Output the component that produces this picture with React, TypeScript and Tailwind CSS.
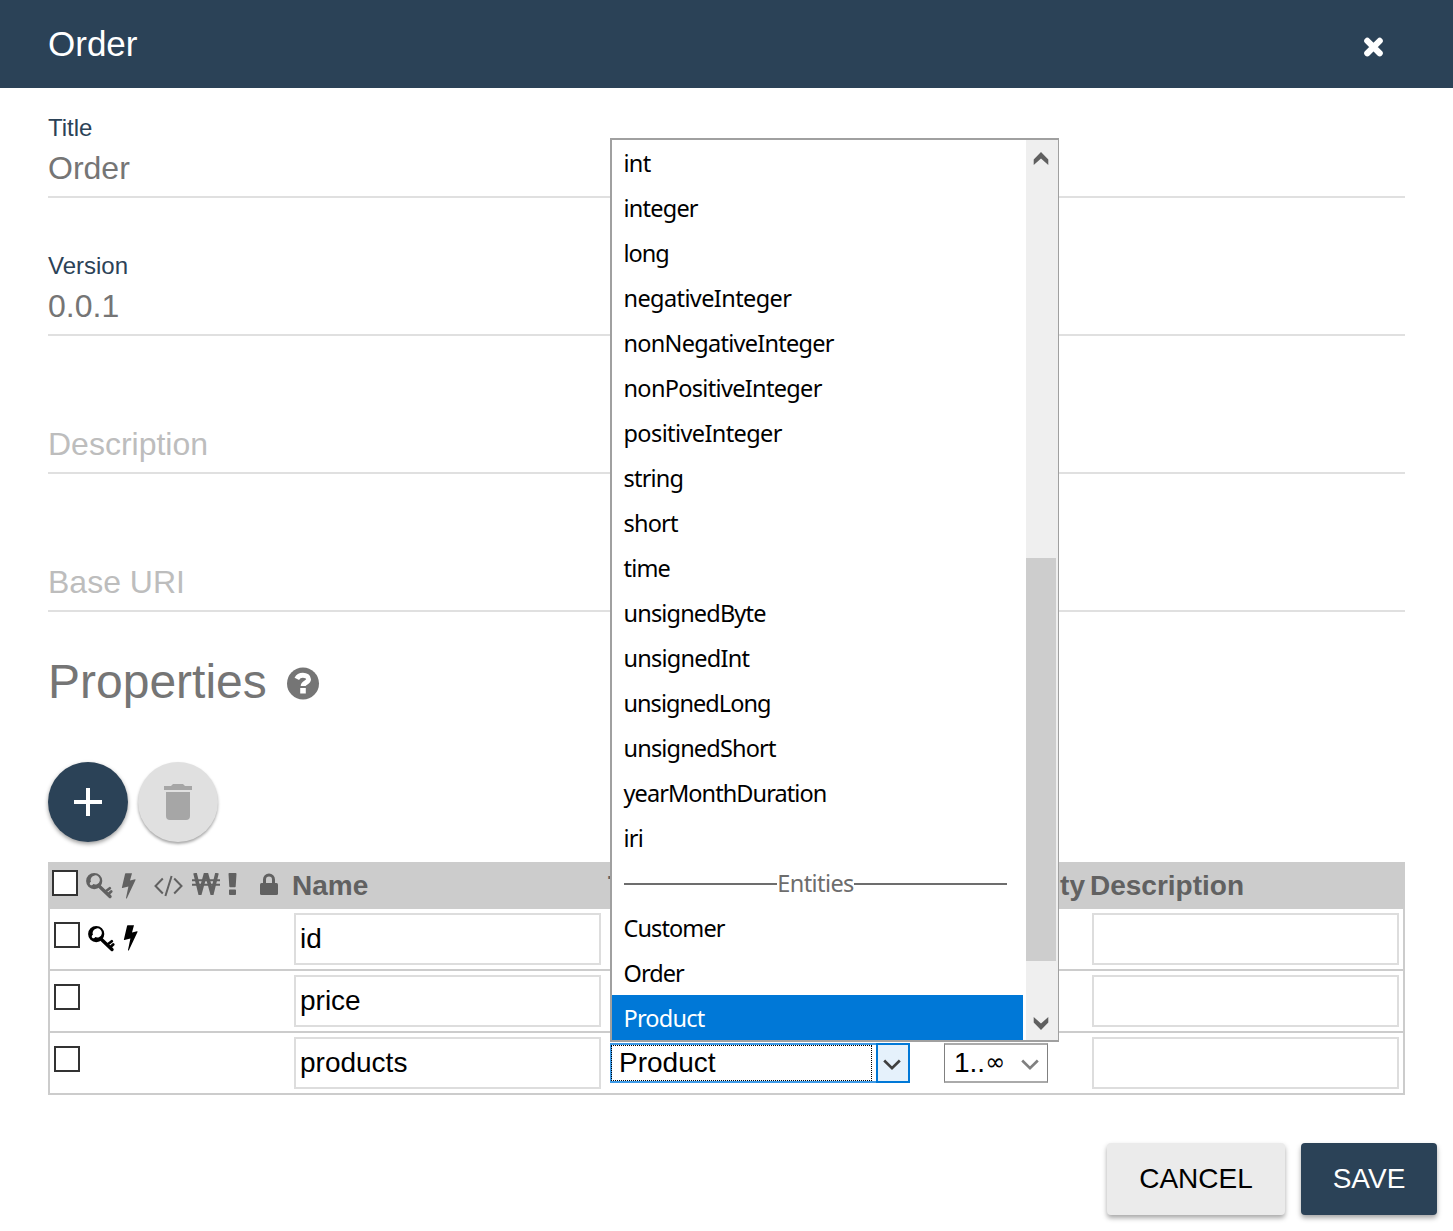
import type { ReactNode } from "react";

const OPTIONS: [string, string][] = [
  ["int", "tracking-[-0.7px]"],
  ["integer", "tracking-[-0.78px]"],
  ["long", "tracking-[-1.05px]"],
  ["negativeInteger", "tracking-[-0.6px]"],
  ["nonNegativeInteger", "tracking-[-0.73px]"],
  ["nonPositiveInteger", "tracking-[-0.68px]"],
  ["positiveInteger", "tracking-[-0.6px]"],
  ["string", "tracking-[-0.8px]"],
  ["short", "tracking-[-0.8px]"],
  ["time", "tracking-[-0.8px]"],
  ["unsignedByte", "tracking-[-0.83px]"],
  ["unsignedInt", "tracking-[-0.75px]"],
  ["unsignedLong", "tracking-[-0.97px]"],
  ["unsignedShort", "tracking-[-0.83px]"],
  ["yearMonthDuration", "tracking-[-0.93px]"],
  ["iri", "tracking-[-0.7px]"],
];

function Key({ className = "" }: { className?: string }) {
  return (
    <svg className={className} width="27" height="26" viewBox="0 0 27 26">
      <path
        fill="currentColor"
        fillRule="evenodd"
        d="M8.200 0a8 8 0 1 1-.01 16.200A8 8 0 0 1 8.200 0ZM7.250 11.100A4.600 4.600 0 1 0 5 8.750 1.800 1.800 0 1 0 7.250 11.100Z"
      />
      <path d="m13 13 11 10.500" fill="none" stroke="currentColor" strokeWidth="3.400" strokeLinecap="round" />
      <path d="m19.500 18.500 4.300-3.300M22.200 21.200l3-2.800" fill="none" stroke="currentColor" strokeWidth="2.700" strokeLinecap="round" />
    </svg>
  );
}

function Bolt({ className = "" }: { className?: string }) {
  return (
    <svg className={className} width="15" height="26" viewBox="0 0 15 26" fill="currentColor">
      <path d="M4.700.2h6.300L9 7.500l5-1.200c.4 0 .7.300.5.700L5.900 25.300c-.2.400-1 .3-.9-.3l2.400-11.400-6 1.500c-.4.100-.6-.2-.5-.6L4.100.7c.1-.3.300-.5.600-.5Z" />
    </svg>
  );
}

function Check({ className = "" }: { className?: string }) {
  return <span className={`block size-[26px] shrink-0 border-2 border-[#333] bg-white ${className}`} />;
}

function Field({ label, value, hint }: { label?: string; value?: string; hint?: string }) {
  return (
    <div className="mb-[28px] h-[110px] border-b-2 border-[#e0e0e0] pt-6">
      <div className="h-[32px] text-[24px] leading-[32px] text-[#2b4257]">{label}</div>
      <div className={`pt-px text-[32px] leading-[46px] ${value ? "text-[#757575]" : "text-[#bdbdbd]"}`}>{value ?? hint}</div>
    </div>
  );
}

function Row({ name, icons, children }: { name: string; icons?: boolean; children?: ReactNode }) {
  return (
    <div className="flex h-[62px] border-x-2 border-b-2 border-[#ccc] pt-1 text-black">
      <div className="flex w-[244px] pl-1">
        <Check className="mt-[9px]" />
        {icons && (
          <>
            <Key className="mt-[13px] ml-2" />
            <Bolt className="mt-[12px] ml-2" />
          </>
        )}
      </div>
      <div className="h-[52px] w-[307px] border-2 border-[#ddd] pl-1 text-[28px] leading-[47px]">{name}</div>
      <div className="w-[491px]">{children}</div>
      <div className="h-[52px] w-[307px] border-2 border-[#ddd]" />
    </div>
  );
}

function Chevron({ className = "" }: { className?: string }) {
  return (
    <svg className={className} width="18" height="12" viewBox="0 0 18 12" fill="none" stroke="currentColor" strokeWidth="2.700">
      <path d="m1.200 1.500 7.800 7.600 7.800-7.600" />
    </svg>
  );
}

function ScrollArrow({ className = "" }: { className?: string }) {
  return (
    <svg className={className} width="16" height="13" viewBox="0 0 16 13" fill="#606060">
      <path d="M8 0 15.300 7.500V13L8 6.500.700 13V7.500Z" />
    </svg>
  );
}

export default function App() {
  return (
    <div className="relative h-[1231px] w-[1453px] overflow-hidden bg-white font-['Liberation_Sans',Arial,sans-serif] text-[#757575]">
      <header className="flex h-[88px] items-center justify-between bg-[#2b4257] pr-[69px] pl-12 text-white">
        <h1 className="text-[35px] leading-[40px]">Order</h1>
        <svg className="mt-[6px]" width="21" height="20" viewBox="0 0 21 20" stroke="currentColor" strokeWidth="6.200" strokeLinecap="round">
          <path d="m4.300 3.900 12.400 12.300M16.700 3.900 4.300 16.200" />
        </svg>
      </header>

      <main className="px-12">
        <Field label="Title" value="Order" />
        <Field label="Version" value="0.0.1" />
        <Field hint="Description" />
        <Field hint="Base URI" />

        <div className="flex h-[84px] items-center">
          <h2 className="text-[48px] leading-[56px]">Properties</h2>
          <svg className="mt-[2px] ml-[20px]" width="33" height="33" viewBox="0 0 33 33">
            <circle cx="16" cy="16.500" r="16" fill="#757575" />
            <path d="M9.800 11.800c1.200-2.400 3.300-3.500 6.100-3.500 3.300 0 5.600 1.500 5.600 4 0 3.500-5.300 3-5.300 6.700" fill="none" stroke="#fff" strokeWidth="5" />
            <path d="M13.200 21h5.600v5.500h-5.600z" fill="#fff" />
          </svg>
        </div>

        <div className="mt-[38px] flex gap-[10px]">
          <button className="flex size-20 items-center justify-center rounded-full bg-[#2b4257] shadow-[0_2px_4px_rgba(0,0,0,0.4)]">
            <svg width="28" height="28" viewBox="0 0 28 28" stroke="#fff" strokeWidth="4">
              <path d="M14 0v28M0 14h28" />
            </svg>
          </button>
          <button className="flex size-20 items-center justify-center rounded-full bg-[#e0e0e0] shadow-[0_2px_3px_rgba(0,0,0,0.35)]">
            <svg width="28" height="36" viewBox="0 0 28 36" fill="#a6a6a6">
              <path d="M2 8h24v24a4 4 0 0 1-4 4H6a4 4 0 0 1-4-4ZM28 2v4H0V2h7l2-2h10l2 2Z" />
            </svg>
          </button>
        </div>

        <section className="mt-5">
          <div className="flex h-[47px] bg-[#ccc] text-[28px] leading-[48px] font-bold text-[#616161]">
            <div className="flex w-[244px] shrink-0 pl-1">
              <Check className="mt-2" />
              <Key className="mt-[11px] ml-2" />
              <Bolt className="mt-[11px] ml-2" />
              <svg className="mt-[13px] ml-[18px]" width="29" height="22" viewBox="0 0 29 22" fill="none" stroke="currentColor" strokeWidth="2">
                <path d="M8.800 3.500 1.500 11l7.300 7.500M20.200 3.500l7.300 7.500-7.300 7.500M17.600 1l-6.200 20" />
              </svg>
              <svg className="mt-[11px] ml-[9px]" width="28" height="22" viewBox="0 0 28 22" fill="none" stroke="currentColor">
                <path d="m3 0 5 20.500L13.500.800h1L20 20.500 25 0" strokeWidth="3.600" />
                <path d="M0 7.200h28M0 11.800h28" strokeWidth="2" />
              </svg>
              <svg className="mt-[11px] ml-2" width="9" height="22" viewBox="0 0 9 22" fill="currentColor">
                <path d="M1.300 0h6.400c.4 0 .8.400.8.800l-.8 12.700c0 .4-.4.700-.8.700H2.100c-.4 0-.8-.3-.8-.7L.5.800c0-.4.400-.8.800-.8ZM1.800 16.500h5.400c.5 0 .8.300.8.800v3.800c0 .5-.3.900-.8.900H1.800c-.5 0-.8-.4-.8-.9v-3.800c0-.5.300-.8.800-.8Z" />
              </svg>
              <svg className="mt-[11px] ml-[23px]" width="18" height="22" viewBox="0 0 18 22">
                <path d="M4.500 11V6.400a4.500 4.500 0 0 1 9 0V11" fill="none" stroke="currentColor" strokeWidth="3" />
                <rect y="10" width="18" height="12" rx="1.500" fill="currentColor" />
              </svg>
            </div>
            <div className="w-[316px] shrink-0">Name</div>
            <div className="flex w-[477px] shrink-0 justify-between">
              <span>Type</span>
              <span>Multiplicity</span>
            </div>
            <div className="pl-[5px]">Description</div>
          </div>
          <Row name="id" icons />
          <Row name="price" />
          <Row name="products">
            <div className="flex pt-[6px] pl-[9px]">
              <div className="flex h-10 w-[300px] border-2 border-[#3c99e6] bg-white text-[28px] leading-[34px]">
                <div className="-ml-px h-[36px] w-[261px] border border-dotted border-black pl-[7px]">Product</div>
                <div className="-my-[2px] -mr-[2px] ml-auto flex w-[34px] items-center justify-center border-2 border-[#0078d7] bg-[#e5f1fb] pr-[2px] text-[#404040]">
                  <Chevron className="mt-1" />
                </div>
              </div>
              <div className="ml-[34px] flex h-10 w-[104px] border border-t-2 border-b-2 border-[#808080] border-t-[#aaa] border-b-[#aaa] pl-[9px] text-[28px] leading-[35px]">
                1..<span className="font-['DejaVu_Sans'] text-[24px] leading-[35px]">∞</span>
                <Chevron className="mt-[14px] mr-2 ml-auto text-[#808080]" />
              </div>
            </div>
          </Row>
        </section>

        <footer className="-mr-8 mt-12 flex justify-end gap-4 text-[28px]">
          <button className="h-[72px] w-[178px] rounded bg-[#ebebeb] pb-px text-black shadow-[0_3px_5px_rgba(0,0,0,0.35)]">CANCEL</button>
          <button className="h-[72px] w-[136px] rounded bg-[#2b4257] pb-px text-white shadow-[0_3px_5px_rgba(0,0,0,0.35)]">SAVE</button>
        </footer>
      </main>

      <div className="absolute top-[138px] left-[610px] flex h-[904px] w-[449px] border-2 border-r border-[#a0a0a0] bg-white font-['Noto_Sans',sans-serif] text-[23.500px] leading-[47px] text-black">
        <div className="w-[411px]">
          {OPTIONS.map(([name, tracking]) => (
            <div key={name} className={`h-[45px] pl-[11.5px] ${tracking}`}>{name}</div>
          ))}
          <div className="flex h-[45px] items-center pr-4 pl-3 tracking-[-0.58px] text-[#6d6d6d]">
            <span className="mt-[2px] h-[2px] flex-1 bg-[#6d6d6d]" />
            <span className="pt-[2px]">Entities</span>
            <span className="mt-[2px] h-[2px] flex-1 bg-[#6d6d6d]" />
          </div>
          <div className="h-[45px] pl-[11.5px] tracking-[-0.9px]">Customer</div>
          <div className="h-[45px] pl-[11.5px] tracking-[-0.95px]">Order</div>
          <div className="h-[45px] bg-[#0078d7] pl-[11.5px] tracking-[-0.8px] text-white">Product</div>
        </div>
        <div className="ml-[3px] flex flex-1 flex-col bg-[#efefef]">
          <ScrollArrow className="mt-[12px] ml-[7px]" />
          <div className="mt-[393px] h-[403px] w-[30px] bg-[#cdcdcd]" />
          <ScrollArrow className="mt-[56px] ml-[7px] rotate-180" />
        </div>
      </div>
    </div>
  );
}
